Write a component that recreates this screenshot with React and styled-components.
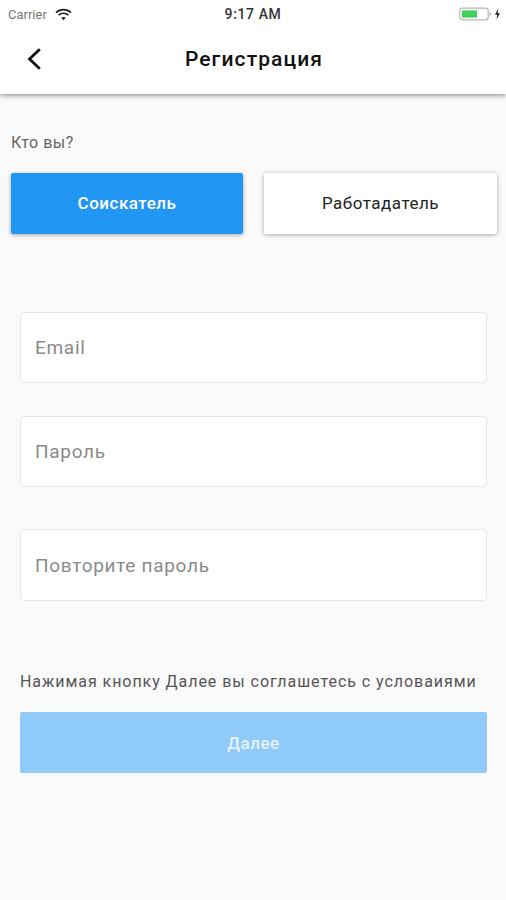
import React from 'react'
import styled, { createGlobalStyle } from 'styled-components'

const Global = createGlobalStyle`
  html, body {
    margin: 0;
    padding: 0;
    background: #fafafa;
  }
  * {
    box-sizing: border-box;
  }
`

function Wifi() {
  return (
    <svg width="17" height="13" viewBox="0 0 17 13">
      <path d="M1 4.6C5.2.6 11.8.6 16 4.6" fill="none" stroke="#222" strokeWidth="1.7" />
      <path d="M3.6 7.2c2.8-2.6 7-2.6 9.8 0" fill="none" stroke="#222" strokeWidth="1.7" />
      <path d="M6.2 9.7c1.3-1.1 3.3-1.1 4.6 0L8.5 12.2z" fill="#222" />
    </svg>
  )
}

function Battery() {
  return (
    <svg width="42" height="14" viewBox="0 0 42 14">
      <rect x="0.7" y="1.2" width="28.5" height="11.6" rx="2.6" fill="none" stroke="#b5b5b5" strokeWidth="1.2" />
      <rect x="3" y="3.4" width="15" height="7.2" fill="#3ed15c" />
      <path d="M30.6 5v4c1-.2 1.6-1 1.6-2s-.6-1.800-1.600-2z" fill="#b5b5b5" />
      <path d="M39.300 1.500 36 7.800h2.200L37.600 12.500l3.300-6.300h-2.200z" fill="#222" />
    </svg>
  )
}

function Back() {
  return (
    <svg width="16" height="24" viewBox="0 0 16 24">
      <path d="M13.800 2.200 3.500 12l10.300 9.800" fill="none" stroke="#111" strokeWidth="2.800" />
    </svg>
  )
}

function App() {
  return (
    <Page>
      <Global />
      <Header>
        <StatusBar>
          <StatusLeft>
            <Carrier>Carrier</Carrier>
            <Wifi />
          </StatusLeft>
          <Clock>9:17 AM</Clock>
          <StatusRight>
            <Battery />
          </StatusRight>
        </StatusBar>
        <NavBar>
          <BackButton>
            <Back />
          </BackButton>
          <Title>Регистрация</Title>
        </NavBar>
      </Header>

      <RoleSection>
        <RoleLabel>Кто вы?</RoleLabel>
        <RoleRow>
          <RoleButton $active>Соискатель</RoleButton>
          <RoleButton>Работадатель</RoleButton>
        </RoleRow>
      </RoleSection>

      <Form>
        <Field $gap={33}>
          <Placeholder>Email</Placeholder>
        </Field>
        <Field $gap={42}>
          <Placeholder>Пароль</Placeholder>
        </Field>
        <Field $tall>
          <Placeholder>Повторите пароль</Placeholder>
        </Field>
        <Terms>Нажимая кнопку Далее вы соглашетесь с условаиями</Terms>
        <SubmitButton>Далее</SubmitButton>
      </Form>
    </Page>
  )
}

export default App

const Page = styled.div`
  width: 506px;
  height: 900px;
  overflow: hidden;
  background: #fafafa;
  font-family: Roboto, "Noto Sans", sans-serif;
`

const Header = styled.header`
  height: 94px;
  background: #fff;
  box-shadow: 0 1px 5px rgba(0, 0, 0, 0.5);
`

const StatusBar = styled.div`
  height: 28px;
  display: grid;
  grid-template-columns: 1fr auto 1fr;
  align-items: center;
  padding: 0 8px;
`

const StatusLeft = styled.div`
  display: flex;
  align-items: center;
  gap: 8px;
`

const StatusRight = styled.div`
  display: flex;
  justify-content: flex-end;
  margin-right: -3px;
`

const Carrier = styled.span`
  font-size: 13px;
  color: #777;
`

const Clock = styled.span`
  font-size: 14px;
  font-weight: 500;
  letter-spacing: 0.600px;
  color: #333;
`

const NavBar = styled.div`
  height: 66px;
  position: relative;
  display: flex;
  align-items: center;
  justify-content: center;
  padding-bottom: 4px;
`

const BackButton = styled.div`
  position: absolute;
  left: 26px;
  top: 19px;
  line-height: 0;
`

const Title = styled.h1`
  margin: 0 0 0 2px;
  font-size: 21px;
  font-weight: 500;
  letter-spacing: 1.100px;
  color: #111;
`

const RoleSection = styled.section`
  padding: 39px 9px 0 11px;
`

const RoleLabel = styled.div`
  font-size: 16px;
  line-height: 20px;
  letter-spacing: 0.500px;
  color: #666;
`

const RoleRow = styled.div`
  display: grid;
  grid-template-columns: 232px 233px;
  column-gap: 21px;
  margin-top: 20px;
`

const RoleButton = styled.div`
  height: 61px;
  padding-bottom: 2px;
  display: flex;
  align-items: center;
  justify-content: center;
  border-radius: 2px;
  font-size: 17px;
  font-weight: ${p => (p.$active ? 500 : 400)};
  letter-spacing: 0.500px;
  color: ${p => (p.$active ? '#fff' : '#222')};
  background: ${p => (p.$active ? '#2196f3' : '#fff')};
  box-shadow: 0 1px 4px rgba(0, 0, 0, 0.35);
`

const Form = styled.section`
  padding: 78px 19px 0 20px;
  display: flex;
  flex-direction: column;
`

const Field = styled.div`
  height: ${p => (p.$tall ? 72 : 71)}px;
  margin-bottom: ${p => p.$gap || 0}px;
  display: flex;
  align-items: center;
  padding-left: 14px;
  background: #fff;
  border: 1px solid #e6e6e6;
  border-radius: 4px;
`

const Placeholder = styled.span`
  font-size: 19px;
  letter-spacing: 0.700px;
  color: #8a8a8a;
`

const Terms = styled.p`
  margin: 70px 0 0;
  font-size: 16px;
  line-height: 22px;
  letter-spacing: 0.950px;
  color: #555;
  white-space: nowrap;
`

const SubmitButton = styled.div`
  height: 61px;
  margin-top: 19px;
  display: flex;
  align-items: center;
  justify-content: center;
  border-radius: 2px;
  font-size: 17px;
  font-weight: 500;
  letter-spacing: 0.500px;
  color: rgba(255, 255, 255, 0.8);
  background: #90caf9;
`
